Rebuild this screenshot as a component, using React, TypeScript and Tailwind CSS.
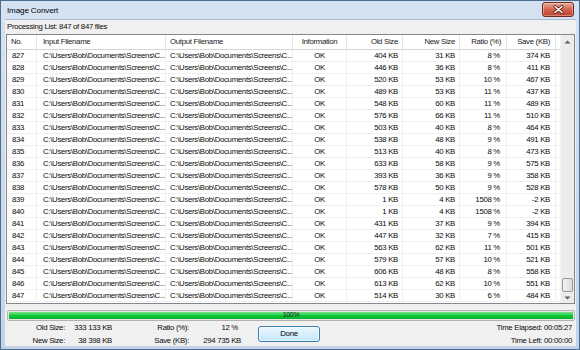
import React from 'react';

const rows: [number, string, string, string, string][] = [
	[827, '404 KB', '31 KB', '8 %', '374 KB'],
	[828, '446 KB', '36 KB', '8 %', '411 KB'],
	[829, '520 KB', '53 KB', '10 %', '467 KB'],
	[830, '489 KB', '53 KB', '11 %', '437 KB'],
	[831, '548 KB', '60 KB', '11 %', '489 KB'],
	[832, '576 KB', '66 KB', '11 %', '510 KB'],
	[833, '503 KB', '40 KB', '8 %', '464 KB'],
	[834, '538 KB', '48 KB', '9 %', '491 KB'],
	[835, '513 KB', '40 KB', '8 %', '473 KB'],
	[836, '633 KB', '58 KB', '9 %', '575 KB'],
	[837, '393 KB', '36 KB', '9 %', '358 KB'],
	[838, '578 KB', '50 KB', '9 %', '528 KB'],
	[839, '1 KB', '4 KB', '1508 %', '-2 KB'],
	[840, '1 KB', '4 KB', '1508 %', '-2 KB'],
	[841, '431 KB', '37 KB', '9 %', '394 KB'],
	[842, '447 KB', '32 KB', '7 %', '415 KB'],
	[843, '563 KB', '62 KB', '11 %', '501 KB'],
	[844, '579 KB', '57 KB', '10 %', '521 KB'],
	[845, '606 KB', '48 KB', '8 %', '558 KB'],
	[846, '613 KB', '62 KB', '10 %', '551 KB'],
	[847, '514 KB', '30 KB', '6 %', '484 KB'],
];

const PATH = 'C:\\Users\\Bob\\Documents\\Screens\\C...';

// column widths + alignment, shared by header and rows
const cols = [
	{ label: 'No.', cls: 'w-[30px] text-left pl-[5px]', head: 'w-[30px] text-left pl-[4px]' },
	{ label: 'Input Filename', cls: 'w-[129px] text-left pl-[6px]', head: 'w-[129px] text-left pl-[6px]' },
	{ label: 'Output Filename', cls: 'w-[127px] text-left pl-[4px]', head: 'w-[127px] text-left pl-[4px]' },
	{ label: 'Information', cls: 'w-[54px] text-center', head: 'w-[54px] text-center' },
	{ label: 'Old Size', cls: 'w-[56px] text-right pr-[4px]', head: 'w-[56px] text-right pr-[4px]' },
	{ label: 'New Size', cls: 'w-[57px] text-right pr-[4px]', head: 'w-[57px] text-right pr-[4px]' },
	{ label: 'Ratio (%)', cls: 'w-[47px] text-right pr-[6px]', head: 'w-[47px] text-right pr-[5px]' },
	{ label: 'Save (KB)', cls: 'w-[49px] text-right pr-[5px]', head: 'w-[49px] text-right pr-[5px]' },
];

function Arrow({ up }: { up?: boolean }) {
	return (
		<svg width="7" height="4" viewBox="0 0 7 4">
			<path d={up ? 'M0.5 3.5 L3.5 0.5 L6.5 3.5 Z' : 'M0.5 0.5 L3.5 3.5 L6.5 0.5 Z'} fill="#5a5a5a" />
		</svg>
	);
}

function CloseButton() {
	return (
		<div className="mt-[1px] flex h-[15px] w-[32px] items-center justify-center rounded-[3px] border border-[#6e2a1e] bg-linear-to-b from-[#e9a998] via-[#d2654c] to-[#c0402a] shadow-[inset_0_0_0_1px_rgba(255,255,255,0.35)]">
			<svg width="11" height="9" viewBox="0 0 11 9">
				<path d="M2 1.5 L9 7.5 M9 1.5 L2 7.5" stroke="#5a1e14" strokeWidth="3" strokeLinecap="round" />
				<path d="M2 1.5 L9 7.5 M9 1.5 L2 7.5" stroke="#ffffff" strokeWidth="1.6" strokeLinecap="round" />
			</svg>
		</div>
	);
}

export default function App() {
	return (
		<div className="h-[350px] w-[580px] overflow-hidden font-['Liberation_Sans',Arial,sans-serif] text-[7.8px] tracking-[-0.3px] text-[#0a0a0a]">
			<div className="flex h-full w-full flex-col border border-[#4f6d8f] bg-linear-to-b from-[#d5e2f1] to-[#c3d3e7]">
				{/* title bar */}
				<div className="flex h-[19px] items-start justify-between pl-[6px] pr-[5px]">
					<span className="mt-[4px] text-[8px] tracking-[-0.1px] text-black">Image Convert</span>
					<CloseButton />
				</div>

				{/* client area */}
				<div className="mb-[3px] ml-[4px] mr-[3px] flex flex-1 flex-col border-t border-[#a9bbd2] bg-[#f0f0f0]">
					<div className="flex h-[14px] items-center pl-[2px]">Processing List: 847 of 847 files</div>

					{/* list view */}
					<div className="ml-[1px] mr-[1px] flex h-[270px] border border-[#828790] bg-white">
						<div className="flex flex-1 flex-col overflow-hidden">
							<div className="flex h-[15px] shrink-0 border-b border-[#d5d5d5] text-[#1a1a1a]">
								{cols.map((c) => (
									<div key={c.label} className={`${c.head} flex h-full shrink-0 items-center justify-between border-r border-[#e5e5e5]`}>
										<span className="w-full whitespace-nowrap">{c.label}</span>
									</div>
								))}
								<div className="flex-1" />
							</div>
							{rows.map(([n, oldS, newS, ratio, save]) => {
								const cells = [String(n), PATH, PATH, 'OK', oldS, newS, ratio, save];
								return (
									<div key={n} className="flex h-[12px] shrink-0 border-b border-[#f0f0f0]">
										{cells.map((v, i) => (
											<div
												key={i}
												className={`${cols[i].cls} flex h-full shrink-0 items-center overflow-hidden whitespace-nowrap border-r border-[#f0f0f0]`}
											>
												<span className="w-full">{v}</span>
											</div>
										))}
										<div className="flex-1" />
									</div>
								);
							})}
						</div>

						{/* scrollbar */}
						<div className="flex w-[14px] flex-col border-l border-[#f3f3f3] bg-[#ececec]">
							<div className="flex h-[13px] items-center justify-center">
								<Arrow up />
							</div>
							<div className="flex-1" />
							<div className="mx-[1px] h-[14px] rounded-[2px] border border-[#979797] bg-linear-to-r from-[#f3f3f3] to-[#dcdcdc]" />
							<div className="flex h-[11px] items-center justify-center">
								<Arrow />
							</div>
						</div>
					</div>

					{/* progress */}
					<div className="relative ml-[2px] mr-[1px] mt-[6px] h-[11px] rounded-[2px] border border-[#b2b2b2] bg-[#e6e6e6] p-[1px]">
						<div className="h-full w-full bg-linear-to-b from-[#6fe48a] via-[#0ccb3a] to-[#06b02c]" />
						<span className="absolute inset-0 flex items-center justify-center text-[7px] text-[#222]">100%</span>
					</div>

					{/* summary */}
					<div className="flex flex-1 items-center pt-[1px]">
						<div className="grid grid-cols-[60px_47px_77px_52px] gap-y-[2px] leading-[11px]">
							<span className="text-right">Old Size:</span>
							<span className="text-right">333 133 KB</span>
							<span className="text-right">Ratio (%):</span>
							<span className="text-right pr-[3px]">12 %</span>
							<span className="text-right">New Size:</span>
							<span className="text-right">38 398 KB</span>
							<span className="text-right">Save (KB):</span>
							<span className="text-right">294 735 KB</span>
						</div>
						<button className="ml-[17px] flex h-[16px] w-[62px] items-center justify-center rounded-[3px] border border-[#3c7fb1] bg-linear-to-b from-[#eaf6fd] via-[#d9f0fc] to-[#bee6fd] text-[7.8px] text-black shadow-[inset_0_0_0_1px_rgba(255,255,255,0.6)]">
							Done
						</button>
						<div className="flex flex-1 flex-col items-end gap-y-[2px] pr-[4px] leading-[11px]">
							<span>Time Elapsed: 00:05:27</span>
							<span>Time Left: 00:00:00</span>
						</div>
					</div>
				</div>
			</div>
		</div>
	);
}
